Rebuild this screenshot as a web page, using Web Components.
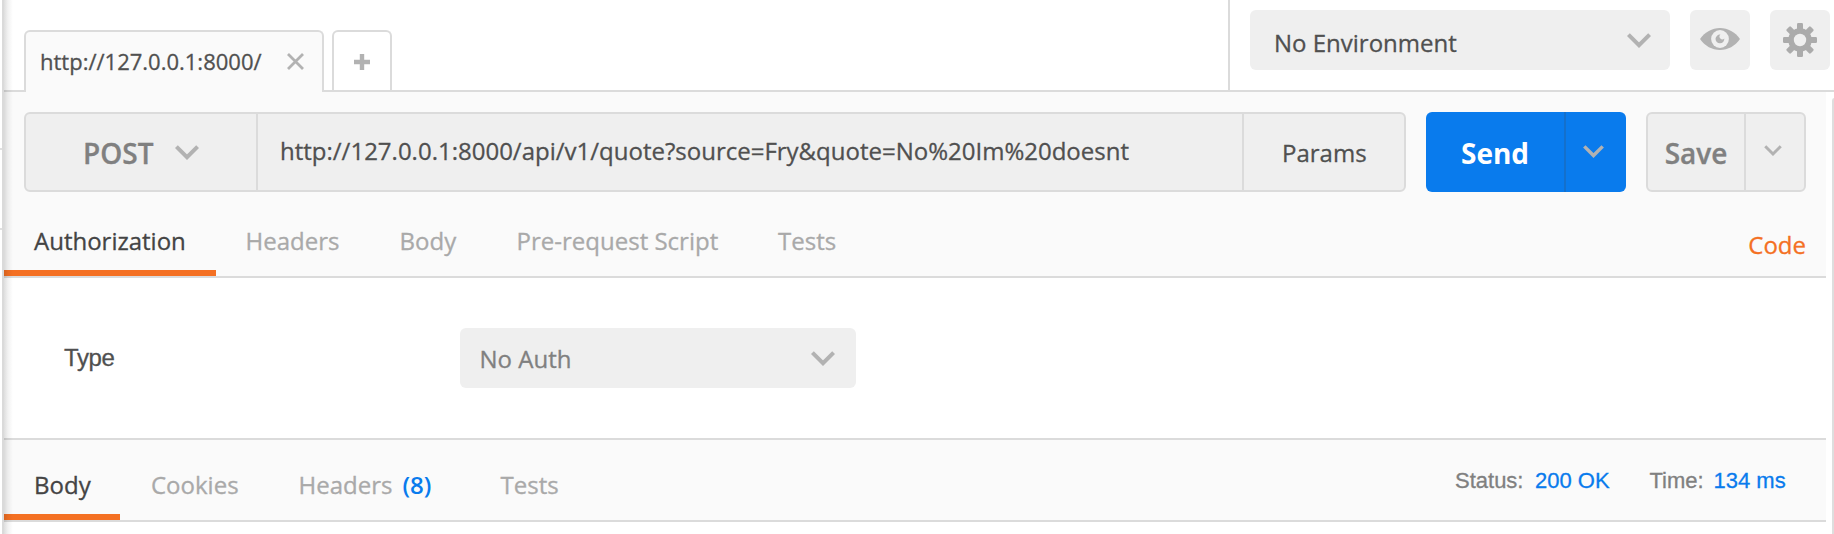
<!DOCTYPE html>
<html lang="en">
<head>
<meta charset="utf-8">
<title>Request builder</title>
<style>
html, body { margin: 0; height: 100%; overflow: hidden; background: #fff; }
body { font: 24px/34px "Open Sans", sans-serif; color: #505050; -webkit-text-stroke: .3px; --line: #dbdbdb; --fill: #efefef; --pane: #fafafa; --accent: #f47023; --blue: #097bed; --icon: #b2b2b2; }
</style>
</head>
<body>
<api-client></api-client>
<script>
const define = (name, html) => {
  const t = document.createElement('template');
  t.innerHTML = '<style>*{box-sizing:border-box}:host{box-sizing:border-box}</style>' + html;
  customElements.define(name, class extends HTMLElement {
    constructor() {
      super();
      this.attachShadow({ mode: 'open' }).append(t.content.cloneNode(true));
    }
  });
};

define('icon-chevron', `
<style>:host{display:block;flex:none;width:24px;height:15px;color:var(--icon)}svg{display:block;width:100%;height:100%}</style>
<svg viewBox="0 0 24 15"><path d="M1.4 1.6 12 12.2 22.6 1.6" fill="none" stroke="currentColor" stroke-width="4"/></svg>`);

define('icon-close', `
<style>:host{display:block;width:17px;height:17px;color:var(--icon)}svg{display:block}</style>
<svg width="17" height="17" viewBox="0 0 17 17"><path d="M1 1 16 16M16 1 1 16" stroke="currentColor" stroke-width="2.8"/></svg>`);

define('icon-plus', `
<style>:host{display:block;width:16px;height:16px;color:var(--icon)}svg{display:block}</style>
<svg width="16" height="16" viewBox="0 0 16 16"><path d="M8 0V16M0 8H16" stroke="currentColor" stroke-width="4.4"/></svg>`);

define('icon-eye', `
<style>:host{display:block;width:40px;height:22px;color:var(--icon)}svg{display:block}</style>
<svg width="40" height="22" viewBox="0 0 40 22"><path d="M0 11C5 4 12 0 20 0S35 4 40 11C35 18 28 22 20 22S5 18 0 11Z" fill="currentColor"/><circle cx="20" cy="11" r="8.9" fill="#efefef"/><path d="M20.4 6.6A4.4 4.4 0 1 0 24.3 10.6A2.6 2.6 0 0 1 20.4 6.6Z" fill="currentColor"/></svg>`);

define('icon-gear', `
<style>:host{display:block;width:34px;height:34px;color:#ababab}svg{display:block}</style>
<svg width="34" height="34" viewBox="-17 -17 34 34"><defs><rect id="t" x="-3" y="-17" width="6" height="34" rx="1.2"/></defs><g fill="currentColor"><circle r="11.8"/><use href="#t"/><use href="#t" transform="rotate(45)"/><use href="#t" transform="rotate(90)"/><use href="#t" transform="rotate(135)"/></g><circle r="6.2" fill="#efefef"/></svg>`);

define('select-box', `
<style>:host{display:flex;align-items:center;justify-content:space-between;height:60px;border-radius:6px;background:var(--fill)}</style>
<slot></slot><icon-chevron></icon-chevron>`);

define('icon-button', `
<style>:host{display:flex;justify-content:center;width:60px;height:60px;border-radius:6px;background:var(--fill)}</style>
<slot></slot>`);

define('request-tab', `
<style>:host{display:flex;align-items:center;width:300px;height:62px;margin-bottom:-2px;padding:0 18.5px 0 14px;justify-content:space-between;border:2px solid var(--line);border-bottom:0;border-radius:6px 6px 0 0;background:var(--pane);font-size:22px}
span{padding-bottom:3px}
icon-close{margin-top:-1px}</style>
<span><slot></slot></span><icon-close></icon-close>`);

define('tab-bar', `
<style>:host{display:flex;height:92px;border-bottom:2px solid var(--line)}
.tabs{display:flex;align-items:flex-end;gap:8px;padding-left:20px;width:1224px}
.new{display:flex;width:60px;height:60px;padding-top:22px;justify-content:center;border:2px solid var(--line);border-bottom:0;border-radius:6px 6px 0 0}
.env{display:flex;flex:none;gap:20px;width:606px;padding:10px 0 0 20px;border-left:2px solid var(--line)}
.sel{width:420px;padding:0 19px 0 24px}
.sel span{padding-top:6px}
icon-eye{margin-top:18px}icon-gear{margin-top:13px}
</style>
<div class="tabs"><request-tab>http://127.0.0.1:8000/</request-tab><div class="new"><icon-plus></icon-plus></div></div>
<div class="env"><select-box class="sel"><span>No Environment</span></select-box>
<icon-button><icon-eye></icon-eye></icon-button><icon-button><icon-gear></icon-gear></icon-button></div>`);

define('url-bar', `
<style>:host{display:flex;flex:none;height:80px;width:1382px;border:2px solid var(--line);border-radius:6px;background:var(--fill)}
div{display:flex;flex:none;align-items:center}
.method{width:230px;padding:0 0 0 57px;gap:22px;font-size:28px;font-weight:600;color:#808080}
.method span{padding-top:2px}
.url{width:988px;padding:0 0 3px 22px;border:solid var(--line);border-width:0 2px}
.params{width:160px;padding:1px 0 0 38px}
</style>
<div class="method"><span>POST</span><icon-chevron></icon-chevron></div>
<div class="url">http://127.0.0.1:8000/api/v1/quote?source=Fry&amp;quote=No%20Im%20doesnt</div>
<div class="params">Params</div>`);

define('split-button', `
<style>:host{display:flex;flex:none;height:80px;border-radius:6px;font-size:28px;font-weight:600;overflow:hidden}
div{display:flex;align-items:center}
.main{flex:1;justify-content:center;padding-top:2px}
.more{flex:none;justify-content:center;align-items:flex-start;border-left:2px solid var(--split)}
:host([primary]){width:200px;background:var(--blue);color:#fff;--split:#1470cc;font-weight:700;-webkit-text-stroke:0}
:host([primary]) .more{width:62px;padding-top:33px;padding-right:5px}
:host([primary]) icon-chevron{width:21px;height:13px}
:host([secondary]){width:160px;border:2px solid var(--line);background:var(--fill);color:#808080;--split:var(--line)}
:host([secondary]) .more{width:60px;padding-top:31px;padding-right:5px}
:host([secondary]) icon-chevron{width:18px;height:11px}
</style>
<div class="main"><slot></slot></div><div class="more"><icon-chevron></icon-chevron></div>`);

define('nav-tab', `
<style>:host{display:block;flex:none;color:#a9a9a9;border-bottom:6px solid transparent;white-space:nowrap}
:host([active]){color:#444;border-color:var(--accent)}
</style><slot></slot>`);

define('request-pane', `
<style>:host{display:block;height:186px;padding-top:20px;background:var(--pane);border-bottom:2px solid var(--line)}
.row{display:flex;gap:20px;padding-left:20px}
nav{display:flex;height:84px}
nav-tab{padding-top:32px}
.code{margin:36px 20px 0 auto;color:var(--accent)}
</style>
<div class="row"><url-bar></url-bar><split-button primary>Send</split-button><split-button secondary>Save</split-button></div>
<nav><nav-tab active style="width:212px;padding-left:30px">Authorization</nav-tab>
<nav-tab style="width:154px;padding-left:29.6px">Headers</nav-tab>
<nav-tab style="width:117px;padding-left:29.6px">Body</nav-tab>
<nav-tab style="width:262px;padding-left:29.6px">Pre-request Script</nav-tab>
<nav-tab style="padding-left:29px">Tests</nav-tab>
<div class="code">Code</div></nav>`);

define('auth-pane', `
<style>:host{display:flex;height:160px;padding:50px 0 0 60px}
.label{width:396px;padding-top:13px;font-family:"Liberation Sans",sans-serif;letter-spacing:-.4px}
select-box{width:396px;padding:0 21px 0 19.5px;color:#808080}
span{padding-top:2px}
</style>
<div class="label">Type</div><select-box><span>No Auth</span></select-box>`);

define('response-pane', `
<style>:host{display:flex;height:84px;background:var(--pane);border:solid var(--line);border-width:2px 0}
nav{display:flex;flex:1}
nav-tab{padding-top:28px}
b{margin-left:10px;font-weight:600;color:var(--blue);-webkit-text-stroke:0}
.meta{display:flex;padding-top:24px;font:22px/34px "Liberation Sans",sans-serif;color:#808080;width:371px}
.meta i{font-style:normal;color:var(--blue)}
</style>
<nav><nav-tab active style="width:116px;padding-left:30px">Body</nav-tab>
<nav-tab style="width:148px;padding-left:31px">Cookies</nav-tab>
<nav-tab style="width:202px;padding-left:30.5px">Headers<b>(8)</b></nav-tab>
<nav-tab style="padding-left:30.5px">Tests</nav-tab></nav>
<div class="meta"><span style="width:80px">Status:</span><i style="width:114.5px">200 OK</i><span style="width:64px">Time:</span><i>134 ms</i></div>`);

define('api-client', `
<style>:host{display:flex;height:534px;position:relative;overflow:hidden}
.side{flex:none;width:4px;border-right:2px solid #dadada;padding-top:148px}
.side div{height:2px;margin-bottom:78px;background:#e0e0e0}
main{flex:1}
.cols{display:flex}
.work{width:1822px}
.edge{flex:none;width:2px;height:436px;margin:6px 0 0 6px;background:#dedede;border-top-left-radius:3px 4px}
.shade{position:absolute;left:4px;top:0;width:9px;height:100%;background:linear-gradient(90deg,rgba(0,0,0,.13),rgba(0,0,0,.05) 45%,transparent)}
</style>
<div class="side"><div></div><div></div></div>
<main><tab-bar></tab-bar>
<div class="cols"><div class="work"><request-pane></request-pane><auth-pane></auth-pane><response-pane></response-pane></div><div class="edge"></div></div></main>
<div class="shade"></div>`);
</script>
</body>
</html>
